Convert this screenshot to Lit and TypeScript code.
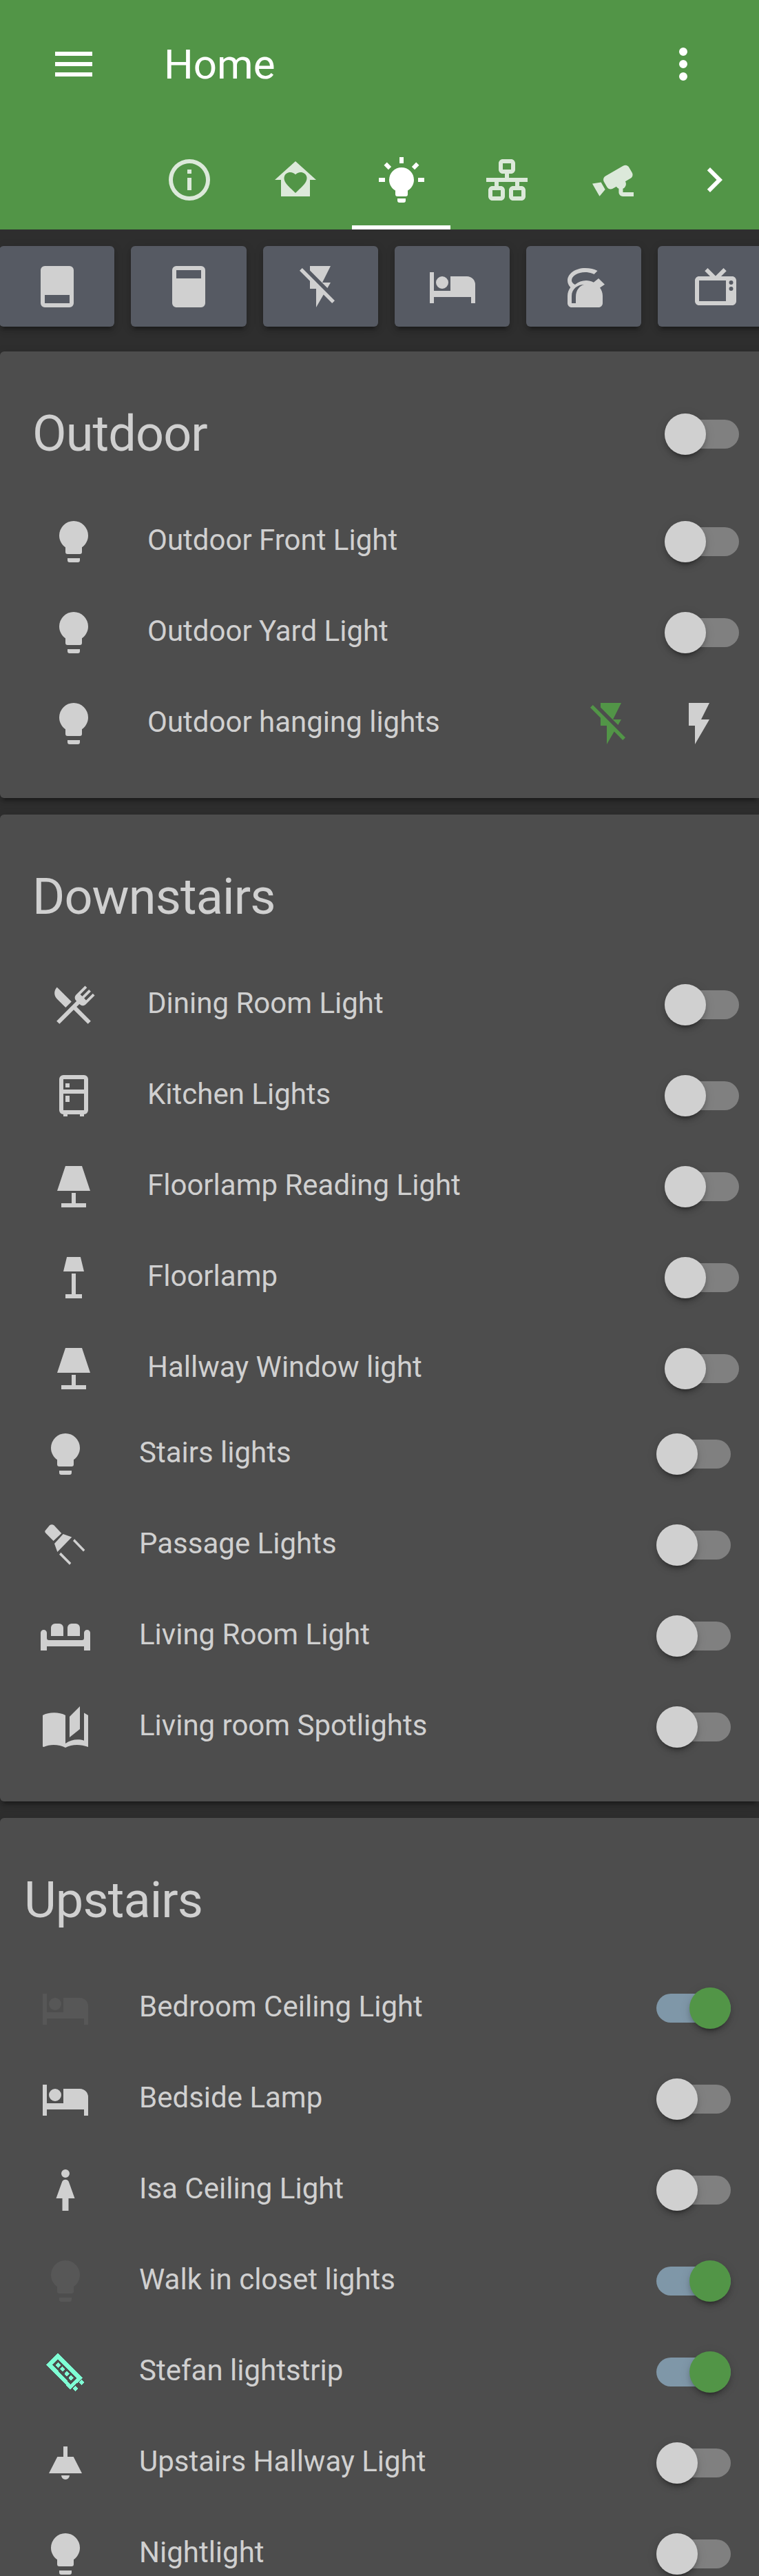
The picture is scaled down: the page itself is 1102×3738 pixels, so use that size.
import { LitElement, html, css } from "lit";
import { customElement } from "lit/decorators.js";

const I: Record<string, string> = {
  menu: "M3,6H21V8H3V6M3,11H21V13H3V11M3,16H21V18H3V16Z",
  dots: "M12,16A2,2 0 0,1 14,18A2,2 0 0,1 12,20A2,2 0 0,1 10,18A2,2 0 0,1 12,16M12,10A2,2 0 0,1 14,12A2,2 0 0,1 12,14A2,2 0 0,1 10,12A2,2 0 0,1 12,10M12,4A2,2 0 0,1 14,6A2,2 0 0,1 12,8A2,2 0 0,1 10,6A2,2 0 0,1 12,4Z",
  info: "M11,9H13V7H11M12,20C7.59,20 4,16.41 4,12C4,7.59 7.59,4 12,4C16.41,4 20,7.59 20,12C20,16.41 16.41,20 12,20M12,2A10,10 0 0,0 2,12A10,10 0 0,0 12,22A10,10 0 0,0 22,12A10,10 0 0,0 12,2M11,17H13V11H11V17Z",
  homeHeart: "M12,3L2,12H5V20H19V12H22L12,3M12,18.3l-.8-.75C8.4,15 6.5,13.3 6.5,11.2C6.5,9.5 7.8,8.3 9.5,8.3c.95,0 1.9.45 2.5,1.15c.6-.7 1.55-1.15 2.5-1.15c1.7,0 3,1.2 3,2.9c0,2.1-1.9,3.8-4.7,6.35z",
  bulbOn: "M12,6A6,6 0 0,1 18,12C18,14.22 16.79,16.16 15,17.2V19A1,1 0 0,1 14,20H10A1,1 0 0,1 9,19V17.2C7.21,16.16 6,14.22 6,12A6,6 0 0,1 12,6M14,21V22A1,1 0 0,1 13,23H11A1,1 0 0,1 10,22V21H14M20,11H23V13H20V11M1,11H4V13H1V11M13,1V4H11V1H13M4.92,3.5L7.05,5.64L5.63,7.05L3.5,4.93L4.92,3.5M16.95,5.63L19.07,3.5L20.5,4.93L18.36,7.05L16.95,5.63Z",
  lan: "M10,2C8.89,2 8,2.89 8,4V7C8,8.11 8.89,9 10,9H11V11H2V13H6V15H5C3.89,15 3,15.89 3,17V20C3,21.11 3.89,22 5,22H9C10.11,22 11,21.11 11,20V17C11,15.89 10.11,15 9,15H8V13H16V15H15C13.89,15 13,15.89 13,17V20C13,21.11 13.89,22 15,22H19C20.11,22 21,21.11 21,20V17C21,15.89 20.11,15 19,15H18V13H22V11H13V9H14C15.11,9 16,8.11 16,7V4C16,2.89 15.11,2 14,2H10M10,4H14V7H10V4M5,17H9V20H5V17M15,17H19V20H15V17Z",
  cctv: "M18.15,4.94C17.77,4.91 17.37,5 17,5.2L8.35,10.2C7.39,10.76 7.07,12 7.62,12.94L9.12,15.53C9.67,16.5 10.89,16.82 11.85,16.27L13.65,15.23C13.92,15.69 14.32,16.06 14.81,16.27V18.04C14.81,19.13 15.7,20 16.81,20H22V18.04H16.81V16.27C17.72,15.87 18.31,14.97 18.31,14C18.31,13.54 18.19,13.11 17.97,12.73L20.5,11.27C21.47,10.71 21.8,9.5 21.24,8.53L19.74,5.94C19.4,5.34 18.79,5 18.15,4.94M6.22,13.17L2,13.87L2.75,15.17L4.75,18.63L5.5,19.93L8.22,16.63L6.22,13.17Z",
  chevron: "M8.59,16.58L13.17,12L8.59,7.41L10,6L16,12L10,18L8.59,16.58Z",
  dockBottom: "M6,2H18A2,2 0 0,1 20,4V20A2,2 0 0,1 18,22H6A2,2 0 0,1 4,20V4A2,2 0 0,1 6,2M6,16V20H18V16H6Z",
  dockTop: "M6,2H18A2,2 0 0,1 20,4V20A2,2 0 0,1 18,22H6A2,2 0 0,1 4,20V4A2,2 0 0,1 6,2M6,4V8H18V4H6Z",
  flashOff: "M17,10H13L17,2H7V4.18L15.46,12.64M3.27,3L2,4.27L7,9.27V13H10V22L13.58,15.85L17.73,20L19,18.73L3.27,3Z",
  flash: "M7,2V13H10V22L17,10H13L17,2H7Z",
  bed: "M19,7H11V14H3V5H1V20H3V17H21V20H23V11A4,4 0 0,0 19,7M7,13A3,3 0 0,0 10,10A3,3 0 0,0 7,7A3,3 0 0,0 4,10A3,3 0 0,0 7,13Z",
  kettle: "M12.5,3C7.81,3 4,5.69 4,9C4,10.19 4.5,11.34 5.44,12.33C4.53,13.5 4,14.96 4,16.5V20C4,21.11 4.89,22 6,22H19C20.11,22 21,21.11 21,20V16.5C21,15.04 20.53,13.63 19.67,12.5L22,10.9L19,8L16.63,9.88C15.5,9.3 14.27,9 13,9C11.04,9 9.13,9.7 7.62,11C6.58,10.45 6,9.73 6,9C6,6.79 9,5 12.5,5C13.67,5 14.82,5.2 15.87,5.6C16.2,5.72 16.53,5.87 16.84,6.03L18.5,4.35C17,3.5 14.9,3 12.5,3ZM6,20V16.5C6,13 9,11 12,11C10,11.5 8,13.5 8,17V20Z",
  tv: "M8.16,3L6.75,4.41L9.34,7H4C2.89,7 2,7.89 2,9V19C2,20.11 2.89,21 4,21H20C21.11,21 22,20.11 22,19V9C22,7.89 21.11,7 20,7H14.66L17.25,4.41L15.84,3L12,6.84L8.16,3M4,9H17V19H4V9M19.5,9A1,1 0 0,1 20.5,10A1,1 0 0,1 19.5,11A1,1 0 0,1 18.5,10A1,1 0 0,1 19.5,9M19.5,12A1,1 0 0,1 20.5,13A1,1 0 0,1 19.5,14A1,1 0 0,1 18.5,13A1,1 0 0,1 19.5,12Z",
  bulb: "M12,2A7,7 0 0,0 5,9C5,11.38 6.19,13.47 8,14.74V17A1,1 0 0,0 9,18H15A1,1 0 0,0 16,17V14.74C17.81,13.47 19,11.38 19,9A7,7 0 0,0 12,2M9,21A1,1 0 0,0 10,22H14A1,1 0 0,0 15,21V20H9V21Z",
  silverware: "M8.1,13.34L3.91,9.16C2.35,7.59 2.35,5.06 3.91,3.5L10.93,10.5L8.1,13.34M13.41,13L20.29,19.88L18.88,21.29L12,14.41L5.12,21.29L3.71,19.88L13.36,10.22L13.16,10C12.38,9.23 12.38,7.97 13.16,7.19L17.5,2.82L18.43,3.74L15.19,7L16.15,7.94L19.39,4.69L20.31,5.61L17.06,8.85L18,9.81L21.26,6.56L22.18,7.5L17.81,11.84C17.03,12.62 15.77,12.62 15,11.84L14.78,11.64L13.41,13Z",
  fridge: "M9,21V22H7V21A2,2 0 0,1 5,19V4A2,2 0 0,1 7,2H17A2,2 0 0,1 19,4V19A2,2 0 0,1 17,21V22H15V21H9M7,4V9H17V4H7M7,19H17V11H7V19M8,12H10V15H8V12M8,6H10V8H8V6Z",
  lamp: "M8,2H16L20,14H4L8,2M11,15H13V20H18V22H6V20H11V15Z",
  floorlamp: "M8.7,2H15.3L17,9H7L8.7,2M11,10H13V20H16V22H8V20H11V10Z",
  spot: "M2.1,5.2L4.3,2.5Q5.4,1.7 6.45,2.45L10.1,6.33L6.2,10L2.55,6.33Q1.9,5.8 2.1,5.2ZM10.9,6.67L15.1,8.2L8.1,15.3L6.67,11.33ZM16.4,9.1L21.45,14.3L20.67,15.2L15.67,10ZM9.78,15.56L14.78,20.67L14,21.56L9,16.56Z",
  sofa: "M5,12V8A2,2 0 0,1 7,6H9A2,2 0 0,1 11,8V12ZM13,12V8A2,2 0 0,1 15,6H17A2,2 0 0,1 19,8V12ZM0,10.5A1.5,1.5 0 0,1 3,10.5V13A1,1 0 0,0 4,14H20A1,1 0 0,0 21,13V10.5A1.5,1.5 0 0,1 24,10.5V19H21V17H3V19H0Z",
  book: "M1,6.3C4,4.7 9,4.7 12,6.3V20C14.5,18.2 18,17.6 21,18.6V5.2L23,6.3V21.7C19,20.2 15,20.4 12,22C9,20.4 4.5,20.2 1.5,21.7L1,21.5ZM19,2V13L14,17V7Z",
  person: "M12,2A2,2 0 0,1 14,4A2,2 0 0,1 12,6A2,2 0 0,1 10,4A2,2 0 0,1 12,2ZM10.4,7.9C10.7,7.3 11.3,6.9 12,6.9S13.3,7.3 13.6,7.9L16.5,16H13.5V22H10.5V16H7.5Z",
  strip: "M8.33,2.78L20.33,14.9L14.33,20.4L2.78,8.45ZM8.33,5.78L5.67,8.45L14.56,18L17.56,15ZM8.45,7.23L9.78,8.56L8.45,9.89L7.12,8.56ZM10.56,9.23L11.89,10.56L10.56,11.89L9.23,10.56ZM12.67,11.34L14,12.67L12.67,14L11.34,12.67ZM14.67,13.34L16,14.67L14.67,16L13.34,14.67ZM19.8,15.8L21.1,17.1L19.8,18.4L18.5,17.1ZM16.9,18.7L18.2,20L16.9,21.3L15.6,20Z",
  pendant: "M11,4H13V9H15.9L20,17H4L8.1,9H11V4M10,18H14A2,2 0 0,1 10,18Z",
};

type Row = { name: string; icon: string; on?: boolean; dim?: boolean; aqua?: boolean; flash?: boolean };

const outdoor: Row[] = [
  { name: "Outdoor Front Light", icon: "bulb" },
  { name: "Outdoor Yard Light", icon: "bulb" },
  { name: "Outdoor hanging lights", icon: "bulb", flash: true },
];
const downstairs: Row[] = [
  { name: "Dining Room Light", icon: "silverware" },
  { name: "Kitchen Lights", icon: "fridge" },
  { name: "Floorlamp Reading Light", icon: "lamp" },
  { name: "Floorlamp", icon: "floorlamp" },
  { name: "Hallway Window light", icon: "lamp" },
];
const nested: Row[] = [
  { name: "Stairs lights", icon: "bulb" },
  { name: "Passage Lights", icon: "spot" },
  { name: "Living Room Light", icon: "sofa" },
  { name: "Living room Spotlights", icon: "book" },
];
const upstairs: Row[] = [
  { name: "Bedroom Ceiling Light", icon: "bed", on: true, dim: true },
  { name: "Bedside Lamp", icon: "bed" },
  { name: "Isa Ceiling Light", icon: "person" },
  { name: "Walk in closet lights", icon: "bulb", on: true, dim: true },
  { name: "Stefan lightstrip", icon: "strip", on: true, aqua: true },
  { name: "Upstairs Hallway Light", icon: "pendant" },
  { name: "Nightlight", icon: "bulb" },
];

@customElement("app-root")
export class AppRoot extends LitElement {
  static styles = css`
    :host {
      display: flex;
      flex-direction: column;
      width: 1102px;
      height: 3738px;
      overflow: hidden;
      background: #2e2e2e;
      font-family: Roboto, "Liberation Sans", sans-serif;
      color: #d0d0d0;
    }
    svg { display: block; width: 72px; height: 72px; fill: currentColor; flex: none; }
    .header { flex: none; height: 333px; background: #529547; color: #fff; }
    .top { height: 186px; display: flex; align-items: center; padding: 0 74px 0 71px; }
    .title { font-size: 60px; margin-left: 95px; flex: 1; }
    .tabs { display: flex; height: 147px; padding-left: 203px; gap: 10.4px; }
    .tab { position: relative; width: 144px; display: flex; justify-content: center; padding-top: 39px; box-sizing: border-box; opacity: .8; }
    .tab.active { opacity: 1; }
    .tab.active::after { content: ""; position: absolute; left: 0; right: 0; bottom: 0; height: 6px; background: #fff; }
    .more { width: 130px; display: flex; justify-content: center; padding-top: 39px; box-sizing: border-box; }
    .buttons { flex: none; display: flex; gap: 24px; overflow: hidden; padding: 24px 0 36px; }
    .btn {
      flex: 0 0 167.3px; height: 117px; border-radius: 6px; background: #565a63;
      display: flex; align-items: center; justify-content: center;
      box-shadow: 0 9px 3px -6px rgba(0,0,0,.2), 0 6px 6px rgba(0,0,0,.14), 0 3px 15px rgba(0,0,0,.12);
    }
    .btn:first-child { margin-left: -1px; }
    .cards { flex: 1; display: flex; flex-direction: column; gap: 24px; min-height: 0; }
    .card {
      flex: none; box-sizing: border-box; background: #4d4d4d; border-radius: 6px 0 0 6px;
      padding: 0 29px 48px 47px;
      box-shadow: 0 9px 3px -6px rgba(0,0,0,.2), 0 6px 6px rgba(0,0,0,.14), 0 3px 15px rgba(0,0,0,.12);
    }
    .card.last { flex: 1; }
    .head { display: flex; align-items: center; justify-content: space-between; padding: 72px 0 48px; height: 96px; box-sizing: content-box; }
    .head h2 { margin: 0; font-size: 72px; font-weight: 400; line-height: 96px; letter-spacing: -0.012em; }
    .rows { display: flex; flex-direction: column; gap: 12px; }
    .shift { margin-left: -12px; margin-right: 12px; }
    .nested { margin-top: 4px; }
    .row { display: flex; align-items: center; height: 120px; }
    .badge { width: 120px; height: 120px; display: flex; align-items: center; justify-content: center; flex: none; }
    .badge.dim { color: #575757; }
    .badge.aqua { color: #7fffd4; }
    .badge.aqua svg { shape-rendering: crispEdges; }
    .name { flex: 1; margin-left: 47px; font-size: 42px; line-height: 60px; padding-bottom: 5px; }
    .toggle { position: relative; width: 108px; height: 42px; border-radius: 21px; background: #808080; flex: none; }
    .toggle.on { background: #7f97a8; }
    .thumb {
      position: absolute; top: -9px; left: 0; width: 60px; height: 60px; border-radius: 50%; background: #d0d0d0;
      box-shadow: 0 9px 3px -6px rgba(0,0,0,.2), 0 6px 6px rgba(0,0,0,.14), 0 3px 15px rgba(0,0,0,.12);
    }
    .toggle.on .thumb { left: 48px; background: #529547; }
    .flashes { display: flex; gap: 56px; padding-right: 22px; }
    .green { color: #529547; }
  `;

  private icon(name: string) {
    return html`<svg viewBox="0 0 24 24"><path fill-rule="evenodd" d=${I[name]}></path></svg>`;
  }

  private toggle(on = false) {
    return html`<div class="toggle ${on ? "on" : ""}"><div class="thumb"></div></div>`;
  }

  private row(r: Row) {
    return html`<div class="row">
      <div class="badge ${r.dim ? "dim" : ""} ${r.aqua ? "aqua" : ""}">${this.icon(r.icon)}</div>
      <div class="name">${r.name}</div>
      ${r.flash
        ? html`<div class="flashes"><span class="green">${this.icon("flashOff")}</span>${this.icon("flash")}</div>`
        : this.toggle(r.on)}
    </div>`;
  }

  render() {
    return html`
      <div class="header">
        <div class="top">
          ${this.icon("menu")}
          <div class="title">Home</div>
          ${this.icon("dots")}
        </div>
        <div class="tabs">
          <div class="tab">${this.icon("info")}</div>
          <div class="tab">${this.icon("homeHeart")}</div>
          <div class="tab active">${this.icon("bulbOn")}</div>
          <div class="tab">${this.icon("lan")}</div>
          <div class="tab">${this.icon("cctv")}</div>
          <div class="more">${this.icon("chevron")}</div>
        </div>
      </div>
      <div class="buttons">
        ${["dockBottom", "dockTop", "flashOff", "bed", "kettle", "tv"].map(
          (n) => html`<div class="btn">${this.icon(n)}</div>`
        )}
      </div>
      <div class="cards">
        <section class="card">
          <div class="head"><h2>Outdoor</h2>${this.toggle()}</div>
          <div class="rows">${outdoor.map((r) => this.row(r))}</div>
        </section>
        <section class="card">
          <div class="head"><h2>Downstairs</h2></div>
          <div class="rows">${downstairs.map((r) => this.row(r))}</div>
          <div class="rows shift nested">${nested.map((r) => this.row(r))}</div>
        </section>
        <section class="card last">
          <div class="head shift"><h2>Upstairs</h2></div>
          <div class="rows shift">${upstairs.map((r) => this.row(r))}</div>
        </section>
      </div>
    `;
  }
}
